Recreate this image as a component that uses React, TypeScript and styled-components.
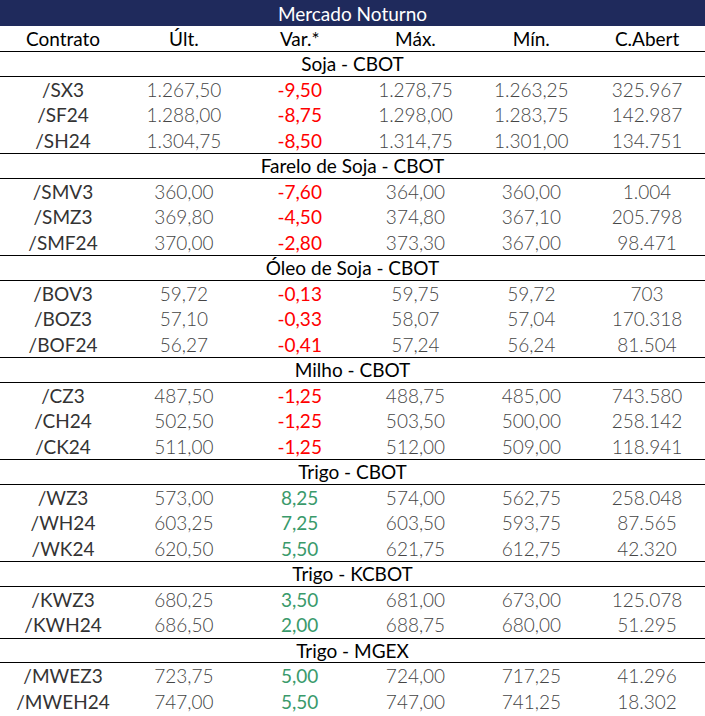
import styled, { createGlobalStyle } from "styled-components";

type Row = { c: string; u: string; v: string; mx: string; mn: string; ab: string };
type Section = { title: string; rows: Row[] };

const sections: Section[] = [
	{
		title: "Soja - CBOT",
		rows: [
			{ c: "/SX3", u: "1.267,50", v: "-9,50", mx: "1.278,75", mn: "1.263,25", ab: "325.967" },
			{ c: "/SF24", u: "1.288,00", v: "-8,75", mx: "1.298,00", mn: "1.283,75", ab: "142.987" },
			{ c: "/SH24", u: "1.304,75", v: "-8,50", mx: "1.314,75", mn: "1.301,00", ab: "134.751" },
		],
	},
	{
		title: "Farelo de Soja - CBOT",
		rows: [
			{ c: "/SMV3", u: "360,00", v: "-7,60", mx: "364,00", mn: "360,00", ab: "1.004" },
			{ c: "/SMZ3", u: "369,80", v: "-4,50", mx: "374,80", mn: "367,10", ab: "205.798" },
			{ c: "/SMF24", u: "370,00", v: "-2,80", mx: "373,30", mn: "367,00", ab: "98.471" },
		],
	},
	{
		title: "Óleo de Soja - CBOT",
		rows: [
			{ c: "/BOV3", u: "59,72", v: "-0,13", mx: "59,75", mn: "59,72", ab: "703" },
			{ c: "/BOZ3", u: "57,10", v: "-0,33", mx: "58,07", mn: "57,04", ab: "170.318" },
			{ c: "/BOF24", u: "56,27", v: "-0,41", mx: "57,24", mn: "56,24", ab: "81.504" },
		],
	},
	{
		title: "Milho - CBOT",
		rows: [
			{ c: "/CZ3", u: "487,50", v: "-1,25", mx: "488,75", mn: "485,00", ab: "743.580" },
			{ c: "/CH24", u: "502,50", v: "-1,25", mx: "503,50", mn: "500,00", ab: "258.142" },
			{ c: "/CK24", u: "511,00", v: "-1,25", mx: "512,00", mn: "509,00", ab: "118.941" },
		],
	},
	{
		title: "Trigo - CBOT",
		rows: [
			{ c: "/WZ3", u: "573,00", v: "8,25", mx: "574,00", mn: "562,75", ab: "258.048" },
			{ c: "/WH24", u: "603,25", v: "7,25", mx: "603,50", mn: "593,75", ab: "87.565" },
			{ c: "/WK24", u: "620,50", v: "5,50", mx: "621,75", mn: "612,75", ab: "42.320" },
		],
	},
	{
		title: "Trigo - KCBOT",
		rows: [
			{ c: "/KWZ3", u: "680,25", v: "3,50", mx: "681,00", mn: "673,00", ab: "125.078" },
			{ c: "/KWH24", u: "686,50", v: "2,00", mx: "688,75", mn: "680,00", ab: "51.295" },
		],
	},
	{
		title: "Trigo - MGEX",
		rows: [
			{ c: "/MWEZ3", u: "723,75", v: "5,00", mx: "724,00", mn: "717,25", ab: "41.296" },
			{ c: "/MWEH24", u: "747,00", v: "5,50", mx: "747,00", mn: "741,25", ab: "18.302" },
		],
	},
];

const GlobalStyle = createGlobalStyle`
	body {
		margin: 0;
		background: #ffffff;
		font-family: Lato, "Open Sans", sans-serif;
	}
`;

const Table = styled.div`
	width: 705px;
	display: flex;
	flex-direction: column;
`;

const TitleBar = styled.div`
	height: 26px;
	background-color: #1f2a5c;
	color: #ffffff;
	font-size: 19px;
	display: flex;
	align-items: center;
	justify-content: center;
	box-sizing: border-box;
`;

const Grid = styled.div`
	display: grid;
	grid-template-columns: 126px repeat(5, 1fr);
	align-items: center;
	box-sizing: border-box;
`;

const HeaderRow = styled(Grid)`
	height: 25px;
	color: #000000;
	font-size: 19px;
	font-weight: 400;
`;

const HeadCell = styled.div`
	text-align: center;
`;

const SectionHeader = styled.div`
	height: 25.5px;
	box-sizing: border-box;
	border-top: 1.5px solid #000000;
	border-bottom: 1.5px solid #000000;
	display: flex;
	align-items: center;
	justify-content: center;
	font-size: 19px;
	font-weight: 400;
	color: #000000;
`;

const DataRow = styled(Grid)`
	height: 25.5px;
	font-size: 19px;
`;

const Contract = styled.div`
	text-align: center;
	color: #333333;
	font-weight: 400;
`;

const Num = styled.div`
	text-align: center;
	color: #454545;
	font-weight: 300;
`;

const Var = styled.div<{ $neg: boolean }>`
	text-align: center;
	color: ${(p) => (p.$neg ? "#ff0000" : "#3a9a6b")};
	font-weight: 400;
`;

const SectionBlock = styled.div`
	display: flex;
	flex-direction: column;
`;

export default function App() {
	return (
		<>
			<GlobalStyle />
			<Table>
				<TitleBar>Mercado Noturno</TitleBar>
				<HeaderRow>
					<HeadCell>Contrato</HeadCell>
					<HeadCell>Últ.</HeadCell>
					<HeadCell>Var.*</HeadCell>
					<HeadCell>Máx.</HeadCell>
					<HeadCell>Mín.</HeadCell>
					<HeadCell>C.Abert</HeadCell>
				</HeaderRow>
				{sections.map((s) => (
					<SectionBlock key={s.title}>
						<SectionHeader>{s.title}</SectionHeader>
						{s.rows.map((r) => (
							<DataRow key={r.c}>
								<Contract>{r.c}</Contract>
								<Num>{r.u}</Num>
								<Var $neg={r.v.startsWith("-")}>{r.v}</Var>
								<Num>{r.mx}</Num>
								<Num>{r.mn}</Num>
								<Num>{r.ab}</Num>
							</DataRow>
						))}
					</SectionBlock>
				))}
			</Table>
		</>
	);
}
